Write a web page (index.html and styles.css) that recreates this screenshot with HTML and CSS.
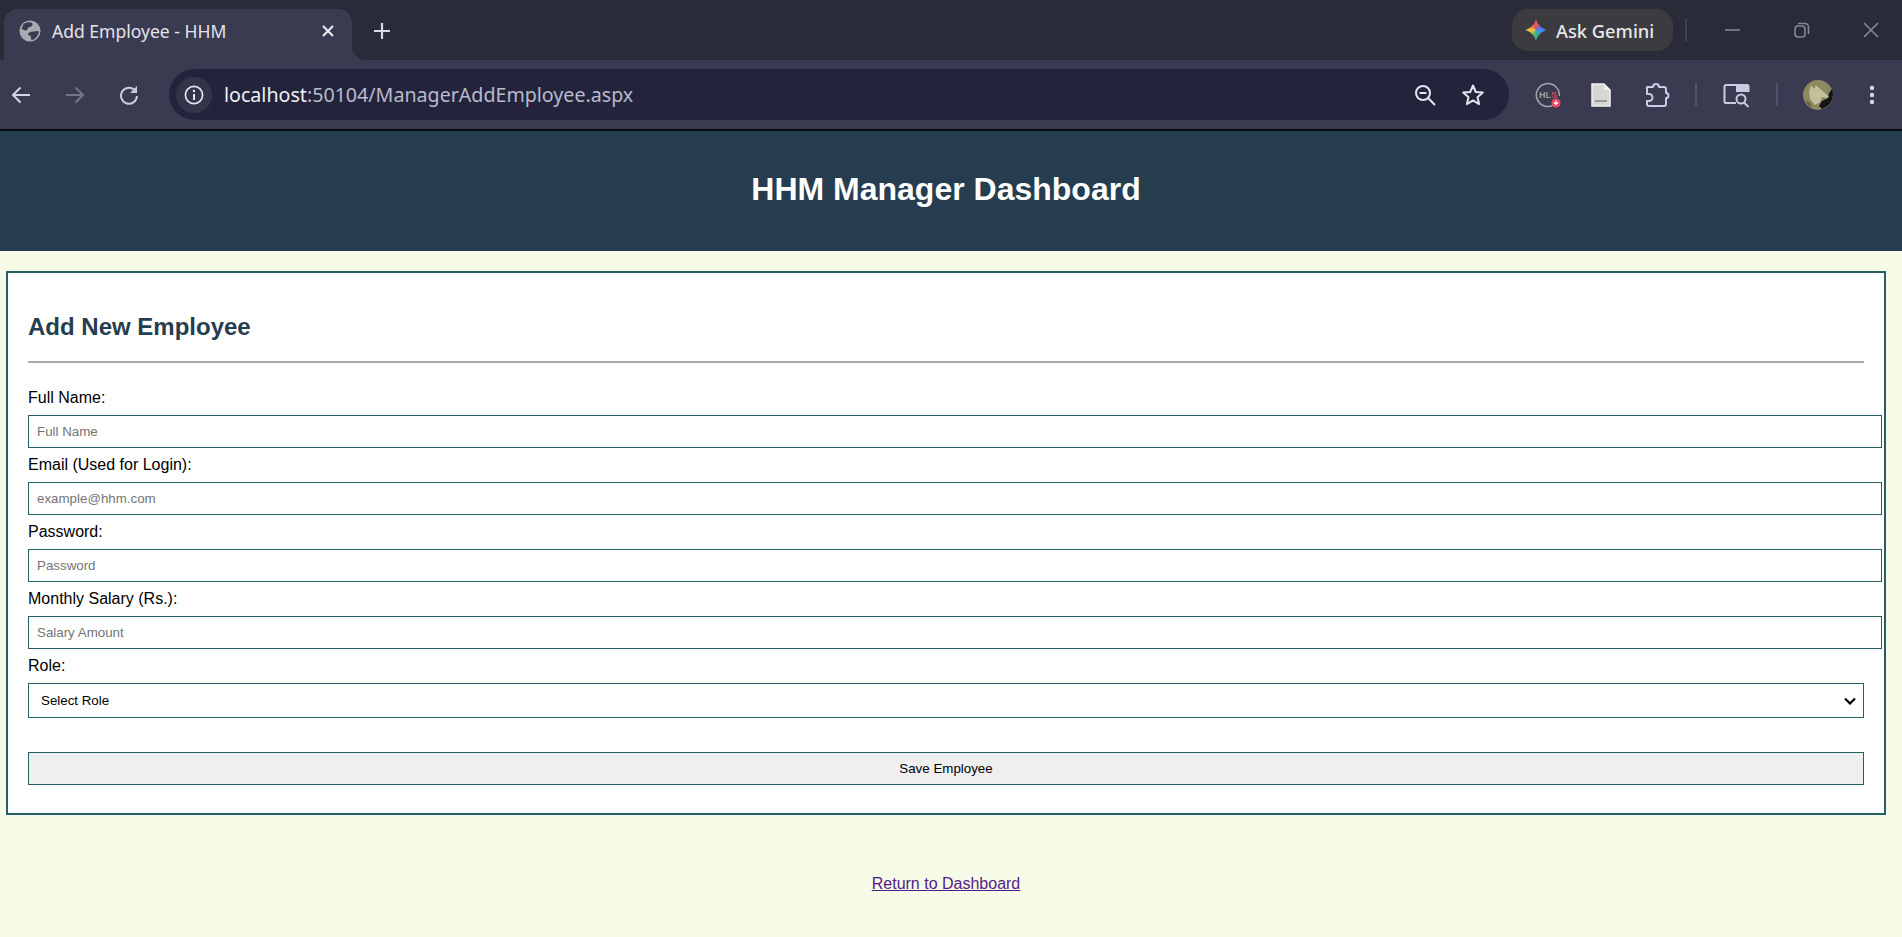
FILE: index.html
```html
<!DOCTYPE html>
<html lang="en">
<head>
    <meta charset="UTF-8">
    <title>Add Employee - HHM</title>
    <link rel="stylesheet" href="styles.css">
</head>
<body>
    <!-- browser window frame -->
    <div class="tab-strip">
        <div class="tab">
            <svg class="globe" width="22" height="22" viewBox="0 0 22 22"><circle cx="11" cy="11" r="10.5" fill="#a9abb3"/><path d="M4.500 4C8 1.500 12 2 13.500 3.500c.5 2-1.500 3.500-3.500 3.500-1.500 1-1.500 3.500-3.500 3.500S4 8.500 2.500 9zM9 13.500c2.500-2.500 6-1.500 8.500-2.500 1.500 0 2.500 0 2.500 1-1 4-3.500 7-7 8-2-1-.5-3-1.500-4s-3-.5-2.500-2.500z" fill="#3a3b50"/></svg>
            <span class="tab-title">Add Employee - HHM</span>
            <svg width="14" height="14" viewBox="0 0 14 14"><path d="M2 2l10 10M12 2L2 12" stroke="#e8e8ee" stroke-width="2.2" fill="none"/></svg>
        </div>
        <svg class="new-tab" width="18" height="18" viewBox="0 0 18 18"><path d="M9 1v16M1 9h16" stroke="#d8d9e2" stroke-width="2.2" fill="none"/></svg>
        <div class="gemini">
            <span class="gemini-star"></span>
            <span>Ask Gemini</span>
        </div>
        <span class="strip-sep"></span>
        <div class="win-btn"><svg width="16" height="16" viewBox="0 0 16 16"><path d="M0 8h15" stroke="#85868f" stroke-width="1.6"/></svg></div>
        <div class="win-btn"><svg width="16" height="16" viewBox="0 0 16 16"><rect x="1" y="4" width="10" height="11" rx="3" fill="none" stroke="#85868f" stroke-width="1.6"/><path d="M4 1.500h7a3.500 3.500 0 0 1 3.500 3.500v7" fill="none" stroke="#85868f" stroke-width="1.6"/></svg></div>
        <div class="win-btn"><svg width="16" height="16" viewBox="0 0 16 16"><path d="M1 1l14 14M15 1L1 15" stroke="#85868f" stroke-width="1.6"/></svg></div>
    </div>

    <div class="toolbar">
        <div class="tool"><svg width="20" height="20" viewBox="0 0 20 20"><path d="M19 10H2M9.500 2.500L2 10l7.500 7.500" stroke="#d3d4e4" stroke-width="2" fill="none"/></svg></div>
        <div class="tool nav-next"><svg width="20" height="20" viewBox="0 0 20 20"><path d="M1 10h17M10.500 2.500L18 10l-7.500 7.500" stroke="#74758a" stroke-width="2" fill="none"/></svg></div>
        <div class="tool nav-next"><svg width="20" height="20" viewBox="0 0 20 20"><path d="M16.500 6A8 8 0 1 0 18 11" stroke="#c9cbdd" stroke-width="2" fill="none"/><path d="M18 1v7h-7z" fill="#c9cbdd"/></svg></div>
        <div class="omnibox">
            <div class="site-info"><svg width="20" height="20" viewBox="0 0 20 20"><circle cx="10" cy="10" r="8.600" fill="none" stroke="#e4e5ee" stroke-width="1.700"/><path d="M10 9v6" stroke="#e4e5ee" stroke-width="2"/><circle cx="10" cy="6" r="1.200" fill="#e4e5ee"/></svg></div>
            <div class="url"><span class="host">localhost</span>:50104/ManagerAddEmployee.aspx</div>
            <div class="tool"><svg width="22" height="22" viewBox="0 0 22 22"><circle cx="9" cy="9" r="7" fill="none" stroke="#e4e5ee" stroke-width="2"/><path d="M5.500 9h7M14 14l7 7" stroke="#e4e5ee" stroke-width="2" fill="none"/></svg></div>
            <div class="tool star"><svg width="24" height="24" viewBox="0 0 24 24"><path d="M12 2.500l2.800 6.500 7 .6-5.300 4.600 1.600 6.900-6.100-3.700-6.100 3.700 1.600-6.900L2.200 9.600l7-.6z" fill="none" stroke="#e4e5ee" stroke-width="2" stroke-linejoin="round"/></svg></div>
        </div>
        <div class="tool ext-hls"><svg width="26" height="26" viewBox="0 0 26 26"><path d="M20 22A11.500 11.500 0 1 1 24.300 14" fill="none" stroke="#a3a4ac" stroke-width="1.500"/><text x="4" y="16" class="hls-text">HL<tspan fill="#d84a5c">S</tspan></text><circle cx="21" cy="21" r="4.500" fill="#f0455f"/><path d="M21 18.500v3.500M19 20.500l2 2 2-2" stroke="#fff" stroke-width="1.200" fill="none"/></svg></div>
        <div class="tool ext-doc"><svg width="20" height="24" viewBox="0 0 20 24"><path d="M1 1h12l6 6v16H1z" fill="#d6d6d4" stroke="#f1f1ef" stroke-width="1.500"/><path d="M13 1v6h6" fill="#f1f1ef"/><path d="M4 18h12" stroke="#9a9a98" stroke-width="2"/></svg></div>
        <div class="tool ext-puzzle"><svg width="26" height="26" viewBox="0 0 26 26"><path d="M3 5h6a3 3 0 0 1 6 0h5a2 2 0 0 1 2 2v4a2.500 2.500 0 0 1 0 5v6a2 2 0 0 1-2 2H5a2 2 0 0 1-2-2v-3h2a3 3 0 0 0 0-7H3V7a2 2 0 0 1 0-2z" fill="none" stroke="#c9cbe2" stroke-width="2" stroke-linejoin="round"/></svg></div>
        <span class="tool-sep sep-first"></span>
        <div class="tool ext-search"><svg width="28" height="26" viewBox="0 0 28 26"><path d="M13 21H3a1.500 1.500 0 0 1-1.500-1.500v-15A1.500 1.500 0 0 1 3 3h21a1.500 1.500 0 0 1 1.500 1.500V9H14V3" fill="none" stroke="#c9cbe2" stroke-width="2"/><path d="M14 3h11v6H14z" fill="#c9cbe2"/><circle cx="18" cy="17" r="4.500" fill="none" stroke="#c9cbe2" stroke-width="2"/><path d="M21 20.500l4.500 4.500" stroke="#c9cbe2" stroke-width="2"/></svg></div>
        <span class="tool-sep sep-second"></span>
        <svg class="avatar" width="30" height="30" viewBox="0 0 30 30"><circle cx="15" cy="15" r="15" fill="#8d8a62"/><path d="M30 15a15 15 0 0 1-11 14l-3-3 3-5 6-3 1-5 3-4a15 15 0 0 1 1 6z" fill="#15161a"/><path d="M8 5l3 4 2-4 3 3 6 5 4 4-3 1-4-1-2 5-5 3-5-6-1-7z" fill="#c3c09c"/><path d="M2 20l4 2 3 5-3-1z" fill="#5f5d3f"/></svg>
        <div class="tool ext-menu"><svg width="6" height="20" viewBox="0 0 6 20"><circle cx="3" cy="3" r="2.200" fill="#d5d6e6"/><circle cx="3" cy="10" r="2.200" fill="#d5d6e6"/><circle cx="3" cy="17" r="2.200" fill="#d5d6e6"/></svg></div>
    </div>

    <!-- page -->
    <header class="page-header">
        <h1>HHM Manager Dashboard</h1>
    </header>

    <div class="page-body">
        <form class="card">
            <h2>Add New Employee</h2>
            <hr>
            <label for="name">Full Name:</label>
            <input id="name" class="field" type="text" placeholder="Full Name">
            <label for="email">Email (Used for Login):</label>
            <input id="email" class="field" type="text" placeholder="example@hhm.com">
            <label for="pass">Password:</label>
            <input id="pass" class="field" type="password" placeholder="Password">
            <label for="salary">Monthly Salary (Rs.):</label>
            <input id="salary" class="field" type="text" placeholder="Salary Amount">
            <label for="role">Role:</label>
            <select id="role" class="field-select">
                <option>Select Role</option>
            </select>
            <button type="button" class="save-btn">Save Employee</button>
        </form>
        <div class="back-link"><a href="#">Return to Dashboard</a></div>
    </div>
</body>
</html>
```

FILE: styles.css
```css
body {
    margin: 0;
    height: 937px;
    overflow: hidden;
    font-family: "Liberation Sans", Arial, sans-serif;
    background-color: #f5fbe6;
    color: #000;
}

/* browser frame */
.tab-strip {
    display: flex;
    align-items: flex-start;
    height: 60px;
    box-sizing: border-box;
    padding-top: 9px;
    background-color: #292b38;
}

.tab {
    position: relative;
    display: flex;
    align-items: center;
    width: 348px;
    height: 51px;
    margin-left: 4px;
    padding: 0 17px 7px 15px;
    box-sizing: border-box;
    background-color: #3a3b50;
    border-radius: 14px 14px 0 0;
}

.tab::after {
    content: "";
    position: absolute;
    right: -14px;
    bottom: 0;
    width: 14px;
    height: 14px;
    background: radial-gradient(circle at 100% 0, transparent 14px, #3a3b50 14.5px);
}

.tab-title {
    flex: 1;
    margin-left: 11px;
    font-family: "Noto Sans", sans-serif;
    font-size: 17.550px;
    color: #e3e3ea;
}

.new-tab {
    margin: 13px 0 0 21px;
}

.gemini {
    display: flex;
    align-items: center;
    gap: 9px;
    width: 161px;
    height: 42px;
    margin-left: auto;
    padding-left: 13px;
    box-sizing: border-box;
    background-color: #3c3b40;
    border-radius: 16px;
    font-family: "Noto Sans", sans-serif;
    font-size: 18.300px;
    font-weight: 500;
    color: #e8e8ea;
}

.gemini-star {
    width: 22px;
    height: 22px;
    background: conic-gradient(#e8564f 0deg, #5b6ff0 60deg, #3b93f2 110deg, #36b37e 180deg, #f5c542 270deg, #ea4f5b 340deg);
    clip-path: path("M11 0C12 5 17 10 22 11C17 12 12 17 11 22C10 17 5 12 0 11C5 10 10 5 11 0Z");
}

.strip-sep {
    width: 2px;
    height: 22px;
    margin: 10px 15px 0 12px;
    background-color: #3f4150;
}

.win-btn {
    display: flex;
    justify-content: center;
    align-items: center;
    width: 62px;
    height: 42px;
    margin-right: 7px;
}

.win-btn:last-child {
    margin-right: 0;
}

.toolbar {
    display: flex;
    align-items: center;
    height: 69px;
    background-color: #3a3b50;
    border-bottom: 2px solid #0c0d12;
}

.tool {
    display: flex;
    justify-content: center;
    align-items: center;
    flex: none;
    width: 42px;
    height: 42px;
}

.nav-next {
    margin-left: 12px;
}

.omnibox {
    display: flex;
    align-items: center;
    flex: none;
    width: 1340px;
    height: 51px;
    margin-left: 19px;
    padding: 0 15px 0 7px;
    box-sizing: border-box;
    background-color: #23243b;
    border-radius: 26px;
}

.site-info {
    display: flex;
    justify-content: center;
    align-items: center;
    width: 36px;
    height: 36px;
    background-color: #33344a;
    border-radius: 50%;
}

.url {
    flex: 1;
    margin-left: 12px;
    font-family: "Noto Sans", sans-serif;
    font-size: 19.640px;
    color: #b9bacb;
}

.host {
    color: #f0f0f5;
}

.star {
    margin-left: 6px;
}

.hls-text {
    font-family: "Liberation Sans", sans-serif;
    font-size: 9px;
    font-weight: bold;
    fill: #9a9ba3;
}

.ext-hls { margin-left: 18px; }
.ext-doc { margin-left: 11px; }
.ext-puzzle { margin-left: 14px; }
.ext-search { margin-left: 19px; }
.ext-menu { margin-left: 18px; }

.tool-sep {
    flex: none;
    width: 2px;
    height: 23px;
    background-color: #50516a;
}

.sep-first { margin-left: 17px; }
.sep-second { margin-left: 18px; }

.avatar {
    flex: none;
    margin-left: 25px;
}

/* page */
.page-header {
    display: flex;
    justify-content: center;
    align-items: center;
    height: 120px;
    padding-right: 10px;
    background-color: #263d4f;
}

.page-header h1 {
    margin: 0 0 3px;
    font-size: 32px;
    color: #fff;
}

.page-body {
    padding: 20px 16px 0 6px;
}

.card {
    padding: 20px 20px 28px;
    background-color: #fff;
    border: 2px solid #255f63;
}

.card h2 {
    margin: 20px 0 20px;
    font-size: 24px;
    color: #263d4f;
}

.card hr {
    height: 2px;
    margin: 0 0 26px;
    border: none;
    background-color: #a9a9a9;
}

.card label {
    display: block;
    margin: 8px 0;
    font-size: 16px;
}

.field {
    display: block;
    width: 100%;
    padding: 8px;
    border: 1px solid #255f63;
    font-family: "Liberation Sans", Arial, sans-serif;
    font-size: 13.333px;
}

.field-select {
    display: block;
    width: 100%;
    height: 35px;
    padding: 8px 8px 8px 12px;
    appearance: none;
    background: #fff url("data:image/svg+xml,%3Csvg xmlns='http://www.w3.org/2000/svg' width='12' height='8'%3E%3Cpath d='M1 1.500l5 5 5-5' fill='none' stroke='%23000' stroke-width='2.200'/%3E%3C/svg%3E") no-repeat right 7px center;
    border: 1px solid #255f63;
    font-family: "Liberation Sans", Arial, sans-serif;
    font-size: 13.333px;
    color: #000;
}

.save-btn {
    display: block;
    width: 100%;
    height: 33px;
    margin-top: 34px;
    padding: 8px;
    background-color: #efefef;
    border: 1px solid #255f63;
    font-family: "Liberation Sans", Arial, sans-serif;
    font-size: 13.333px;
    color: #000;
}

.back-link {
    margin-top: 60px;
    text-align: center;
    font-size: 16px;
}

.back-link a {
    color: #551a8b;
}
```
